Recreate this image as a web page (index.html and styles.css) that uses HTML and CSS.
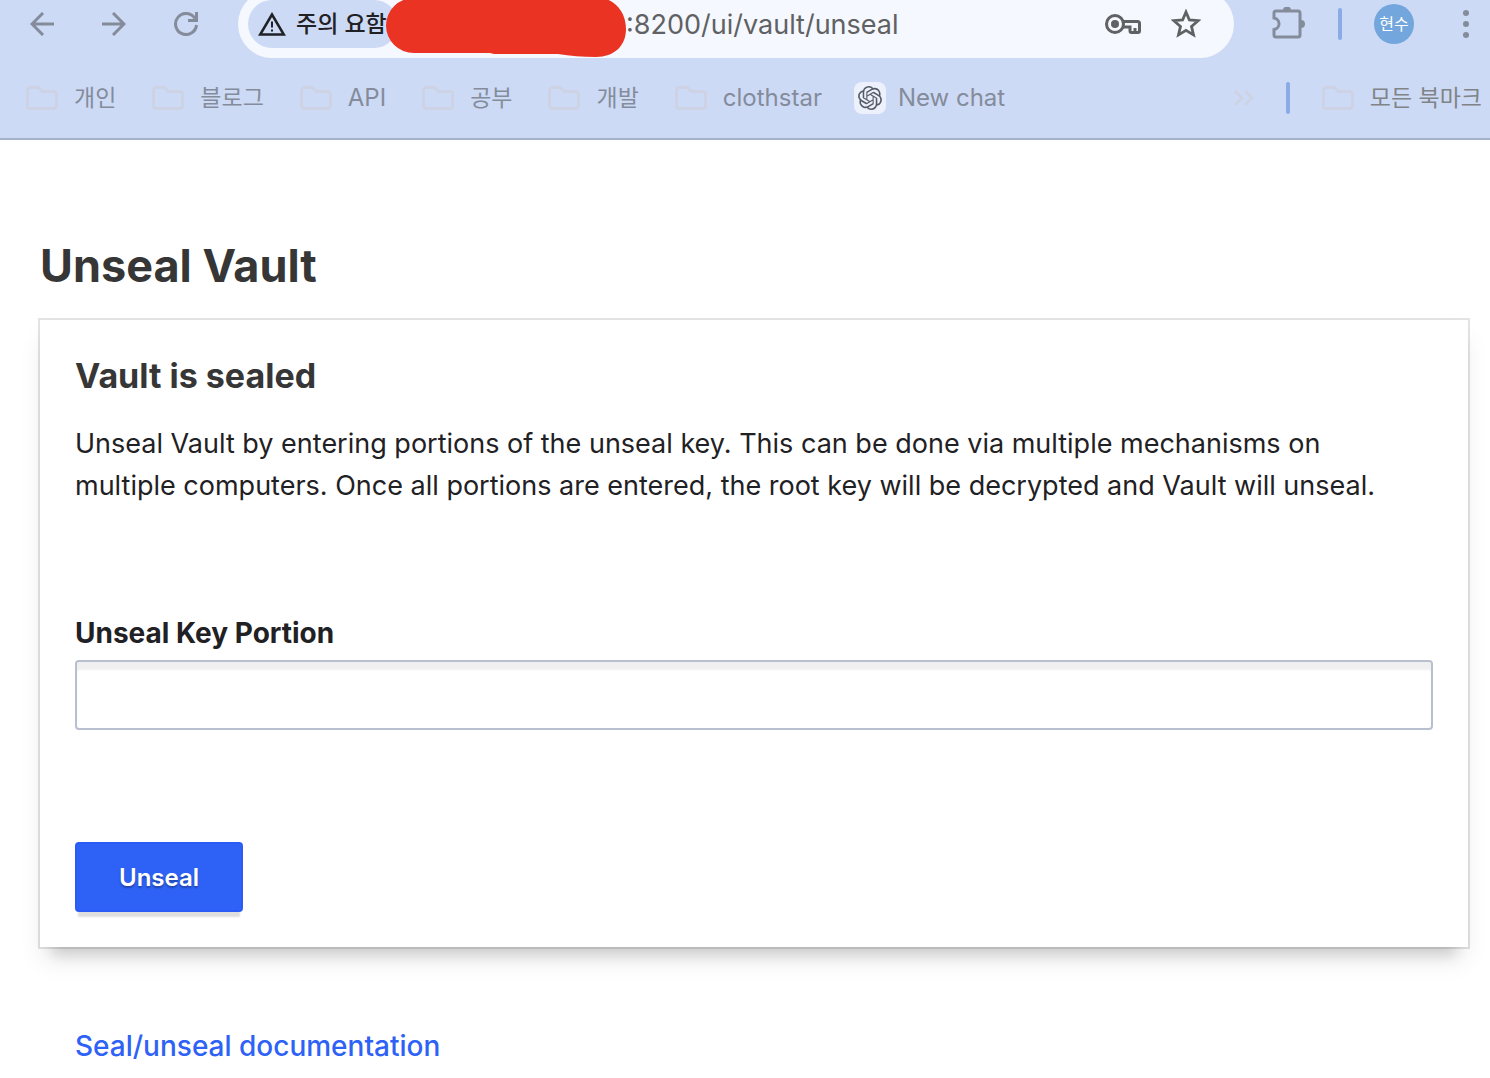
FILE: index.html
```html
<!DOCTYPE html>
<html lang="ko">
<head>
  <meta charset="UTF-8">
  <meta name="viewport" content="width=device-width, initial-scale=1.0">
  <title>Vault</title>
  <link rel="stylesheet" href="styles.css">
</head>
<body>
  <svg class="sprite" aria-hidden="true">
    <symbol id="folder" viewBox="0 0 32 24">
      <path d="M4 1.500h8.500l4 4H28a2.500 2.500 0 0 1 2.500 2.500v12a2.500 2.500 0 0 1-2.500 2.500H4A2.500 2.500 0 0 1 1.500 20V4A2.500 2.500 0 0 1 4 1.500z" fill="none" stroke="currentColor" stroke-width="3"/>
    </symbol>
  </svg>

  <header class="browser">
    <div class="toolbar">
      <div class="nav-buttons">
        <button class="icon-button" aria-label="Back">
          <svg width="24" height="24" viewBox="0 0 24 24" fill="none" stroke="currentColor" stroke-width="3"><path d="M24 12H2M13 1L2 12l11 11"/></svg>
        </button>
        <button class="icon-button" aria-label="Forward">
          <svg width="24" height="24" viewBox="0 0 24 24" fill="none" stroke="currentColor" stroke-width="3"><path d="M0 12h22M11 1l11 11-11 11"/></svg>
        </button>
        <button class="icon-button" aria-label="Reload">
          <svg width="24" height="24" viewBox="0 0 24 24" fill="none" stroke="currentColor" stroke-width="3"><path d="M21 6.500A10.500 10.500 0 1 0 22.500 13M22.500 0v8.500H14"/></svg>
        </button>
      </div>

      <div class="omnibox">
        <button class="site-info">
          <svg width="28" height="24" viewBox="0 0 28 24"><path d="M14 2.500L2.200 22.500h23.600z" fill="none" stroke="currentColor" stroke-width="2.500"/><path d="M13 9.500h2v6h-2zM13 17.500h2v2h-2z" fill="currentColor"/></svg>
          주의 요함
        </button>
        <svg class="redaction" width="240" height="67" viewBox="0 0 240 67"><path d="M28 8H216C229 10 240 22 240 39C240 56 228 67 210 67Q190 67 172 64H108L104 63H28A28 27.500 0 0 1 28 8z" fill="#eb3323"/></svg>
        <span class="url">:8200/ui/vault/unseal</span>
        <button class="icon-button" aria-label="Passwords">
          <svg width="36" height="22" viewBox="0 0 36 22"><circle cx="10" cy="11" r="8.500" fill="none" stroke="currentColor" stroke-width="3"/><circle cx="10" cy="11" r="4" fill="currentColor"/><path d="M18 8.500h14.500a2 2 0 0 1 2 2V18a1.500 1.500 0 0 1-1.500 1.500h-6.500a1.500 1.500 0 0 1-1.500-1.500v-4h-7M30 19v-4" fill="none" stroke="currentColor" stroke-width="3"/></svg>
        </button>
        <button class="icon-button" aria-label="Bookmark this page">
          <svg width="30" height="30" viewBox="0 0 30 30"><path d="M15 3l3.400 8 8.700.7-6.600 5.700 2 8.500-7.500-4.500-7.500 4.500 2-8.500-6.600-5.700 8.700-.7z" fill="none" stroke="currentColor" stroke-width="2.800"/></svg>
        </button>
      </div>

      <div class="toolbar-end">
        <button class="icon-button" aria-label="Extensions">
          <svg width="34" height="34" viewBox="0 2 34 34"><path d="M4 6h22a2 2 0 0 1 2 2v22a2 2 0 0 1-2 2H4a2 2 0 0 1-2-2v-5.500a5.800 5.800 0 0 0 0-11.500V8a2 2 0 0 1 2-2z" fill="none" stroke="currentColor" stroke-width="3"/><path d="M11 5.500a4 4 0 0 1 8 0zM29 15a4 4 0 0 1 0 8z" fill="currentColor"/></svg>
        </button>
        <span class="divider"></span>
        <button class="avatar">현수</button>
        <button class="icon-button" aria-label="Menu">
          <svg width="8" height="28" viewBox="0 0 8 28" fill="currentColor"><circle cx="4" cy="3" r="3"/><circle cx="4" cy="14" r="3"/><circle cx="4" cy="25" r="3"/></svg>
        </button>
      </div>
    </div>

    <nav class="bookmarks">
      <a class="bookmark" href="#"><svg class="folder"><use href="#folder"/></svg>개인</a>
      <a class="bookmark" href="#"><svg class="folder"><use href="#folder"/></svg>블로그</a>
      <a class="bookmark latin" href="#"><svg class="folder"><use href="#folder"/></svg>API</a>
      <a class="bookmark" href="#"><svg class="folder"><use href="#folder"/></svg>공부</a>
      <a class="bookmark" href="#"><svg class="folder"><use href="#folder"/></svg>개발</a>
      <a class="bookmark latin" href="#"><svg class="folder"><use href="#folder"/></svg>clothstar</a>
      <a class="bookmark latin chat" href="#">
        <span class="favicon">
          <svg width="24" height="24" viewBox="0 0 24 24" fill="currentColor"><path d="M22.2819 9.8211a5.9847 5.9847 0 0 0-.5157-4.9108 6.0462 6.0462 0 0 0-6.5098-2.9A6.0651 6.0651 0 0 0 4.9807 4.1818a5.9847 5.9847 0 0 0-3.9977 2.9 6.0462 6.0462 0 0 0 .7427 7.0966 5.98 5.98 0 0 0 .511 4.9107 6.051 6.051 0 0 0 6.5146 2.9001A5.9847 5.9847 0 0 0 13.2599 24a6.0557 6.0557 0 0 0 5.7718-4.2058 5.9894 5.9894 0 0 0 3.9977-2.9001 6.0557 6.0557 0 0 0-.7475-7.0729zm-9.022 12.6081a4.4755 4.4755 0 0 1-2.8764-1.0408l.1419-.0804 4.7783-2.7582a.7948.7948 0 0 0 .3927-.6813v-6.7369l2.02 1.1686a.071.071 0 0 1 .038.052v5.5826a4.504 4.504 0 0 1-4.4945 4.4944zm-9.6607-4.1254a4.4708 4.4708 0 0 1-.5346-3.0137l.142.0852 4.783 2.7582a.7712.7712 0 0 0 .7806 0l5.8428-3.3685v2.3324a.0804.0804 0 0 1-.0332.0615L9.74 19.9502a4.4992 4.4992 0 0 1-6.1408-1.6464zM2.3408 7.8956a4.485 4.485 0 0 1 2.3655-1.9728V11.6a.7664.7664 0 0 0 .3879.6765l5.8144 3.3543-2.0201 1.1685a.0757.0757 0 0 1-.071 0l-4.8303-2.7865A4.504 4.504 0 0 1 2.3408 7.872zm16.5963 3.8558L13.1038 8.364 15.1192 7.2a.0757.0757 0 0 1 .071 0l4.8303 2.7913a4.4944 4.4944 0 0 1-.6765 8.1042v-5.6772a.79.79 0 0 0-.407-.667zm2.0107-3.0231l-.142-.0852-4.7735-2.7818a.7759.7759 0 0 0-.7854 0L9.409 9.2297V6.8974a.0662.0662 0 0 1 .0284-.0615l4.8303-2.7866a4.4992 4.4992 0 0 1 6.6802 4.66zM8.3065 12.863l-2.02-1.1638a.0804.0804 0 0 1-.038-.0567V6.0742a4.4992 4.4992 0 0 1 7.3757-3.4537l-.142.0805L8.704 5.459a.7948.7948 0 0 0-.3927.6813zm1.0976-2.3654l2.602-1.4998 2.6069 1.4998v2.9994l-2.5974 1.4997-2.6067-1.4997z"/></svg>
        </span>
        New chat
      </a>
      <div class="bookmarks-end">
        <button class="icon-button more" aria-label="More bookmarks">
          <svg width="20" height="16" viewBox="0 0 20 16" fill="none" stroke="currentColor" stroke-width="3"><path d="M1 1l7 7-7 7M11 1l7 7-7 7"/></svg>
        </button>
        <span class="divider"></span>
        <a class="bookmark all" href="#"><svg class="folder"><use href="#folder"/></svg>모든 북마크</a>
      </div>
    </nav>
  </header>

  <main class="page">
    <h1>Unseal Vault</h1>

    <form class="box">
      <h2>Vault is sealed</h2>
      <p>Unseal Vault by entering portions of the unseal key. This can be done via multiple mechanisms on multiple computers. Once all portions are entered, the root key will be decrypted and Vault will unseal.</p>
      <div class="field">
        <label for="key">Unseal Key Portion</label>
        <input type="password" id="key" autocomplete="off">
      </div>
      <button class="unseal-button" type="button">Unseal</button>
    </form>

    <a class="doc-link" href="#">Seal/unseal documentation</a>
  </main>
</body>
</html>
```
FILE: styles.css
```css
* {
  box-sizing: border-box;
}
body {
  margin: 0;
  background-color: #fff;
  color: #1f2124;
  font-family: Inter, "Noto Sans CJK KR", sans-serif;
}
button {
  padding: 0;
  border: none;
  background: none;
  color: inherit;
  font-family: inherit;
  cursor: pointer;
}
a {
  text-decoration: none;
}
svg {
  display: block;
  flex: none;
}
.sprite {
  position: absolute;
  width: 0;
  height: 0;
}

/* browser chrome */
.browser {
  background-color: #cddaf5;
  border-bottom: 2px solid #a5b1cb;
  color: #848c9b;
}
.toolbar {
  display: flex;
  align-items: center;
  height: 68px;
  margin-top: -10px;
  padding: 0 20px 0 30px;
}
.nav-buttons {
  display: flex;
  gap: 48px;
  margin-right: 40px;
}
.omnibox {
  position: relative;
  display: flex;
  align-items: center;
  flex: 1;
  height: 68px;
  padding: 0 33px 0 10px;
  border-radius: 34px;
  background-color: #f5f8fe;
  color: #5f6163;
}
.omnibox .icon-button {
  margin-left: 30px;
}
.site-info {
  display: flex;
  align-items: center;
  gap: 10px;
  width: 150px;
  height: 48px;
  padding-left: 10px;
  border-radius: 24px;
  background-color: #cddaf5;
  color: #1f2124;
  font-size: 23px;
  font-weight: 500;
  line-height: 32px;
  white-space: nowrap;
}
.redaction {
  position: absolute;
  left: 148px;
  top: 0;
}
.url {
  flex: 1;
  margin-left: 228px;
  font-size: 27px;
}
.toolbar-end {
  display: flex;
  align-items: center;
  gap: 32px;
  margin-left: 38px;
}
.toolbar-end .avatar {
  margin-right: 16px;
}
.divider {
  width: 4px;
  height: 32px;
  border-radius: 2px;
  background-color: #8aabe6;
}
.avatar {
  width: 40px;
  height: 40px;
  border-radius: 50%;
  background-color: #73a6dc;
  color: #fff;
  font-size: 16px;
  line-height: 40px;
}
.bookmarks {
  display: flex;
  align-items: center;
  gap: 36px;
  height: 80px;
  padding: 0 8px 0 26px;
}
.bookmark {
  display: flex;
  align-items: center;
  gap: 16px;
  color: #848c9b;
  font-size: 23px;
  line-height: 32px;
  white-space: nowrap;
}
.latin {
  font-size: 24px;
}
.chat {
  gap: 12px;
  margin-left: -4px;
}
.folder {
  width: 32px;
  height: 24px;
  color: #cdd3e4;
}
.favicon {
  display: flex;
  align-items: center;
  justify-content: center;
  width: 32px;
  height: 32px;
  border-radius: 8px;
  background-color: #edf1fc;
  color: #555b68;
}
.bookmarks-end {
  display: flex;
  align-items: center;
  gap: 32px;
  margin-left: auto;
}
.more {
  color: #cdd3e4;
}
.all {
  color: #808487;
}

/* vault page */
.page {
  padding: 96px 22px 0 40px;
}
h1 {
  margin: 0 0 24px;
  color: #363636;
  font-size: 45px;
  font-weight: 700;
  line-height: 60px;
}
.box {
  padding: 36px 35px 35px;
  box-shadow: 0 0 0 2px rgba(0, 0, 0, 0.11),
    0 20px 12px -12px rgba(0, 0, 0, 0.12),
    0 16px 24px -4px rgba(0, 0, 0, 0.1);
}
h2 {
  margin: 0 0 27px;
  color: #363636;
  font-size: 34px;
  font-weight: 700;
  line-height: 40px;
}
p {
  margin: 0;
  padding-right: 20px;
  font-size: 27px;
  line-height: 42px;
}
.field {
  margin: 105px 0 112px;
}
label {
  display: block;
  margin-bottom: 6px;
  font-size: 28px;
  font-weight: 700;
  line-height: 42px;
}
input {
  display: block;
  width: 100%;
  height: 70px;
  padding: 0 16px;
  border: 2px solid #babfcf;
  border-radius: 4px;
  box-shadow: inset 0 8px 2px rgba(0, 0, 0, 0.06);
  font-size: 27px;
}
.unseal-button {
  display: block;
  min-width: 168px;
  height: 70px;
  border: 2px solid #2a5cf5;
  border-radius: 4px;
  background-color: #2e62f6;
  box-shadow: 0 8px 2px -3px rgba(0, 0, 0, 0.13);
  color: #fff;
  font-size: 24px;
  font-weight: 600;
  text-shadow: 0 2px 2px rgba(0, 0, 0, 0.3);
}
.doc-link {
  display: inline-block;
  margin: 79px 35px 0;
  color: #2e62f6;
  font-size: 28px;
  font-weight: 500;
  line-height: 40px;
}
```
